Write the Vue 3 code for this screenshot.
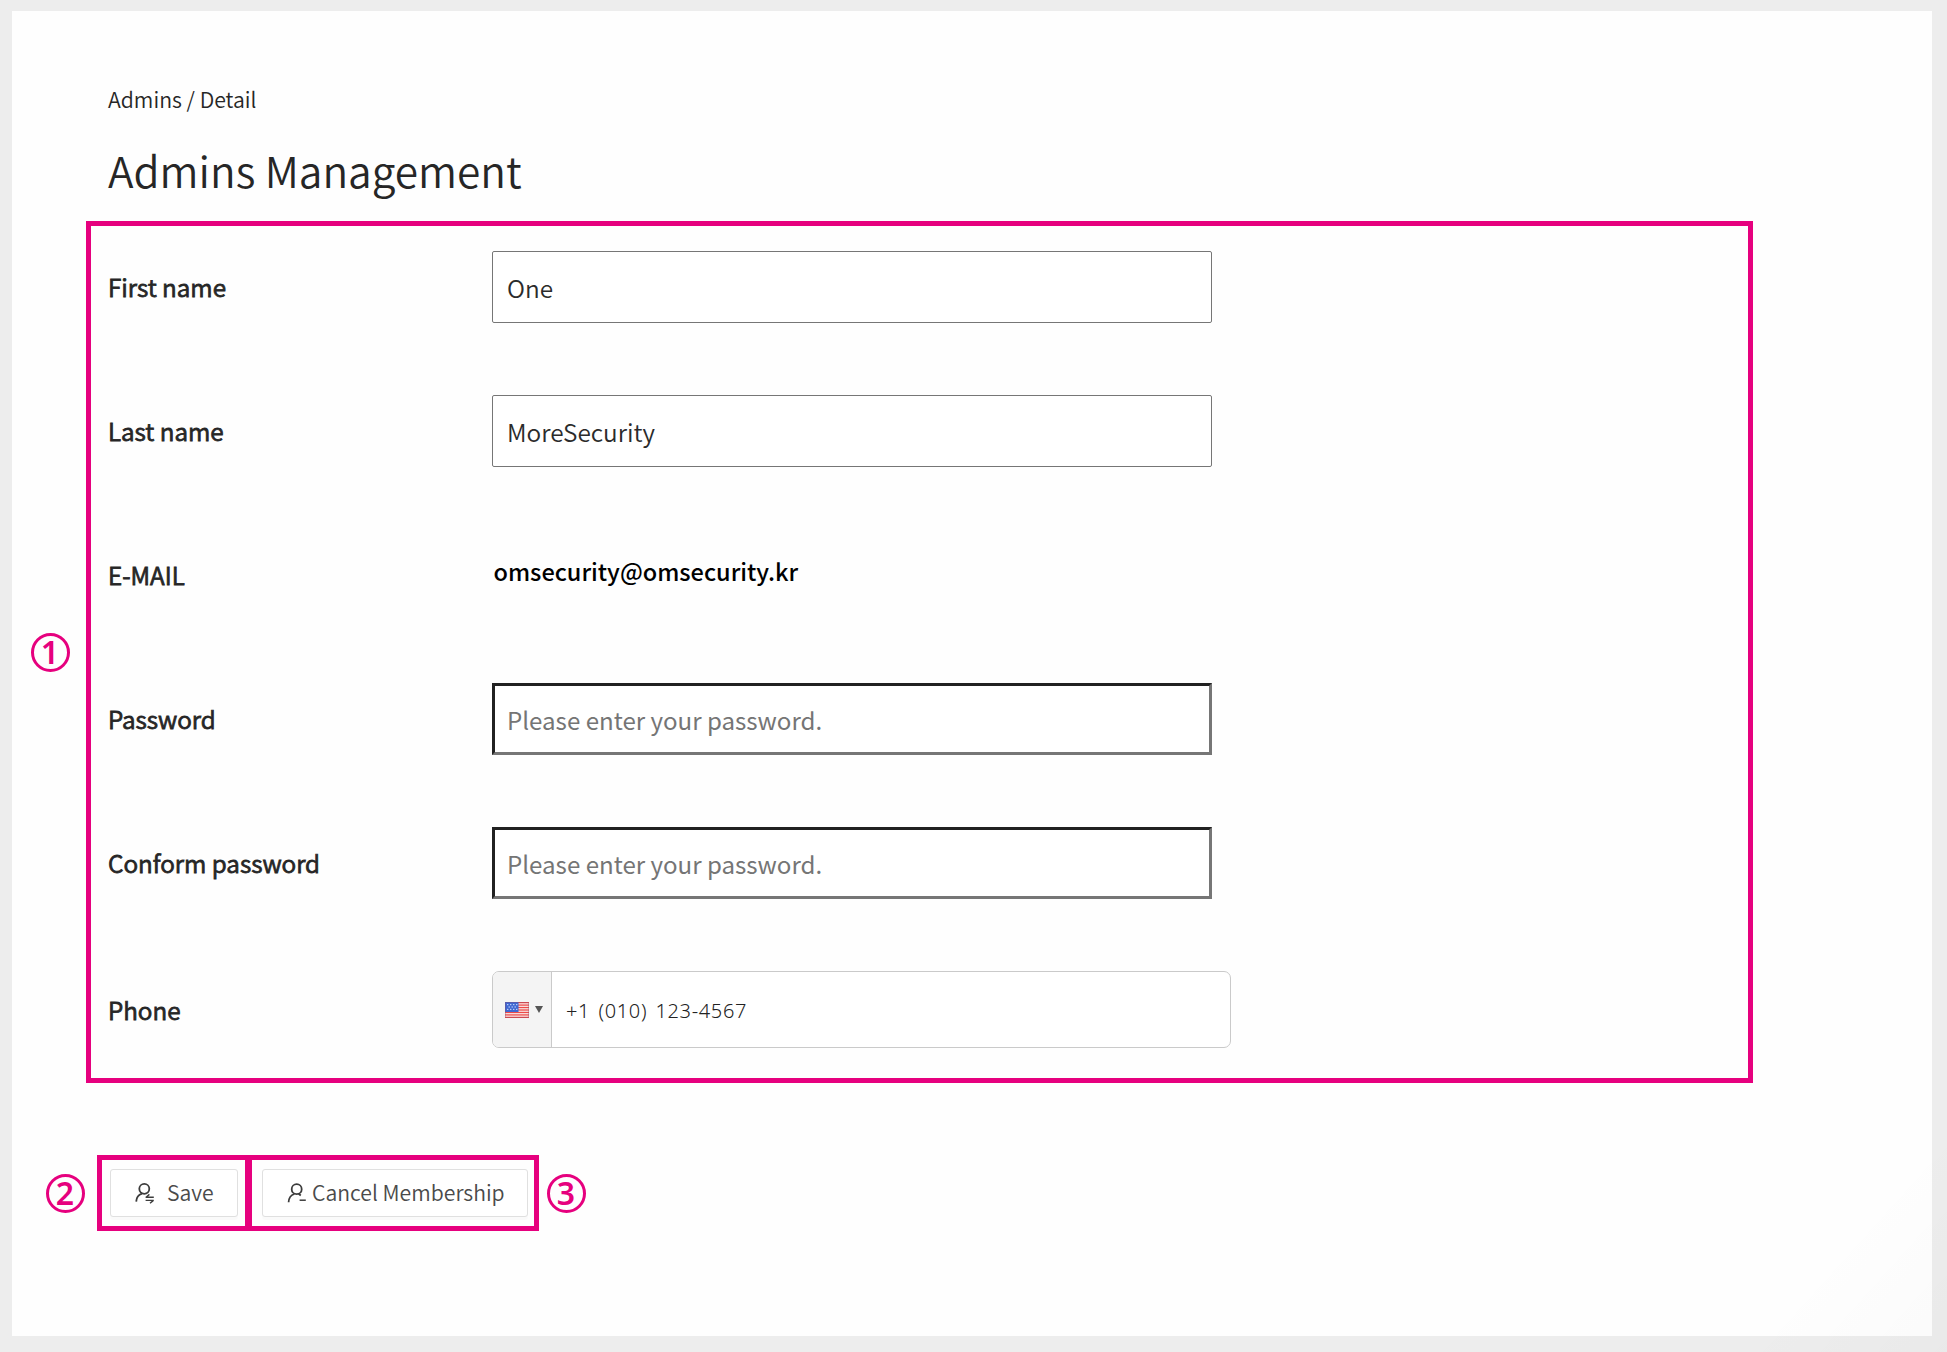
<script setup>
import { ref } from 'vue'

const form = ref({
  firstName: 'One',
  lastName: 'MoreSecurity',
  email: 'omsecurity@omsecurity.kr',
  password: '',
  confirm: '',
  phone: '+1 (010) 123-4567',
})
const placeholder = 'Please enter your password.'
const stripes = [0, 1, 2, 3, 4, 5, 6]
</script>

<template>
  <div class="page">
    <main class="panel">
      <nav class="breadcrumb">Admins / Detail</nav>
      <h1 class="title">Admins Management</h1>

      <section class="form marked">
        <span class="badge badge-form">1</span>
        <div class="row">
          <label>First name</label>
          <input v-model="form.firstName" class="field plain" type="text" />
        </div>
        <div class="row">
          <label>Last name</label>
          <input v-model="form.lastName" class="field plain" type="text" />
        </div>
        <div class="row">
          <label>E-MAIL</label>
          <span class="email">{{ form.email }}</span>
        </div>
        <div class="row">
          <label>Password</label>
          <input v-model="form.password" class="field inset" type="password" :placeholder="placeholder" />
        </div>
        <div class="row">
          <label>Conform password</label>
          <input v-model="form.confirm" class="field inset" type="password" :placeholder="placeholder" />
        </div>
        <div class="row row-phone">
          <label>Phone</label>
          <div class="phone">
            <div class="country">
              <svg class="flag" width="24" height="16" viewBox="0 0 24 16">
                <rect width="24" height="16" fill="#f7e9e9" />
                <rect v-for="s in stripes" :key="s" x="0" :y="s * 2.46" width="24" height="1.25" fill="#ee4a48" />
                <rect width="13.5" height="10" fill="#3f68d2" />
                <g fill="#b9cbf5">
                  <rect x="2" y="2" width="1.4" height="1.2" /><rect x="5" y="2" width="1.4" height="1.2" /><rect x="8" y="2" width="1.4" height="1.2" /><rect x="11" y="2" width="1.4" height="1.2" />
                  <rect x="3.5" y="4.4" width="1.4" height="1.2" /><rect x="6.5" y="4.4" width="1.4" height="1.2" /><rect x="9.5" y="4.4" width="1.4" height="1.2" />
                  <rect x="2" y="6.8" width="1.4" height="1.2" /><rect x="5" y="6.8" width="1.4" height="1.2" /><rect x="8" y="6.8" width="1.4" height="1.2" /><rect x="11" y="6.8" width="1.4" height="1.2" />
                </g>
                <rect x=".5" y=".5" width="23" height="15" fill="none" stroke="#8a4a6a" stroke-opacity=".35" />
              </svg>
              <span class="caret"></span>
            </div>
            <input v-model="form.phone" class="phone-input" type="tel" />
          </div>
        </div>
      </section>

      <div class="actions">
        <div class="action marked save">
          <span class="badge badge-save">2</span>
          <button type="button">
            <svg width="20" height="22" viewBox="0 0 20 22" fill="none" stroke="#3c3c3c" stroke-width="1.8">
              <circle cx="9.3" cy="6.8" r="5" />
              <path d="M1.2 19.6C1.4 15.4 3.4 12.7 7 11.6" />
              <path d="M10.6 15.2H18.8M14.4 12.4L11.4 15M10.6 18.4H18.8M18.2 18.6L15 21.2" stroke-width="1.4" />
            </svg>
            <span>Save</span>
          </button>
        </div>
        <div class="action marked cancel">
          <span class="badge badge-cancel">3</span>
          <button type="button">
            <svg width="20" height="22" viewBox="0 0 20 22" fill="none" stroke="#3c3c3c" stroke-width="1.8">
              <circle cx="9.7" cy="7.2" r="5" />
              <path d="M1.6 20.3C1.8 15.8 3.8 13.1 7.4 12M11.6 11.8L13.8 13.5" />
              <path d="M12.6 18.2H18.8" stroke-width="1.5" />
            </svg>
            <span>Cancel Membership</span>
          </button>
        </div>
      </div>
    </main>
  </div>
</template>

<style>
body {
  margin: 0;
}
</style>

<style scoped>
.page {
  position: relative;
  box-sizing: border-box;
  width: 1947px;
  height: 1352px;
  padding: 11px 15px 16px 12px;
  background: #ededed;
  font-family: "Noto Sans CJK KR", "Noto Sans", sans-serif;
  font-weight: 350;
  color: #262626;
  overflow: hidden;
}
.page::after {
  content: "";
  position: absolute;
  right: 0;
  bottom: 0;
  width: 400px;
  height: 400px;
  background: linear-gradient(132deg, rgba(0, 0, 0, 0) 72%, rgba(0, 0, 0, 0.016) 100%);
  pointer-events: none;
}
.panel {
  box-sizing: border-box;
  width: 1920px;
  height: 1325px;
  padding: 72px 0 0 74px;
  background: #fefefe;
}
.breadcrumb {
  margin-left: 22px;
  font-size: 21.25px;
  line-height: 32px;
}
.title {
  margin: 24px 0 20px 22px;
  font-size: 42.4px;
  font-weight: 350;
  line-height: 62px;
}
.marked {
  position: relative;
  box-sizing: border-box;
  border: 5px solid #e6007e;
}
.badge {
  position: absolute;
  box-sizing: border-box;
  width: 39px;
  height: 39px;
  border: 3px solid #e6007e;
  border-radius: 50%;
  color: #e6007e;
  font: 600 32px/31px "Noto Sans", sans-serif;
  text-align: center;
}
.badge-form {
  left: -60.5px;
  top: 406.5px;
}
.badge-save {
  left: -56.5px;
  top: 13.5px;
}
.badge-cancel {
  left: 294.5px;
  top: 13.5px;
}
.form {
  display: flex;
  flex-direction: column;
  gap: 72px;
  width: 1667px;
  height: 862px;
  padding: 25px 0 0 17px;
}
.row {
  display: grid;
  grid-template-columns: 384px 739px;
  align-items: center;
  height: 72px;
}
.row-phone {
  height: 77px;
}
label {
  padding-bottom: 1px;
  font-size: 24.3px;
  line-height: 35px;
  -webkit-text-stroke: 0.8px currentColor;
}
.field {
  box-sizing: border-box;
  width: 720px;
  height: 72px;
  margin: 0;
  outline: none;
  background: #fff;
  color: #2b2b2b;
  font-family: inherit;
  font-size: 24.35px;
  font-weight: 350;
}
.field::placeholder {
  color: #757575;
}
.plain {
  padding: 0 14px;
  border: 1px solid #767676;
  border-radius: 2px;
}
.inset {
  padding: 1px 12px 0;
  border: 3px solid;
  border-color: #212121 #767676 #767676 #212121;
  border-radius: 0;
  font-size: 24.1px;
  font-weight: 400;
}
.email {
  margin: 0 0 8px 1.5px;
  color: #000;
  font-size: 23.5px;
  font-weight: 500;
  line-height: 34px;
}
.phone {
  display: flex;
  box-sizing: border-box;
  width: 739px;
  height: 77px;
  border: 1px solid #cacaca;
  border-radius: 7px;
  background: #fff;
  overflow: hidden;
}
.country {
  display: flex;
  align-items: center;
  gap: 6px;
  box-sizing: border-box;
  width: 59px;
  padding-left: 12px;
  border-right: 1px solid #cacaca;
  background: #f4f4f4;
}
.flag {
  display: block;
}
.caret {
  border: 4.5px solid transparent;
  border-top: 7px solid #555;
  border-bottom: 0;
}
.phone-input {
  flex: 1;
  min-width: 0;
  padding: 2px 0 0 14px;
  border: 0;
  outline: none;
  background: transparent;
  color: #222;
  font: 350 20px "Noto Sans", sans-serif;
  letter-spacing: 0.65px;
  word-spacing: 2.5px;
}
.actions {
  display: flex;
  margin: 72px 0 0 11px;
}
.action {
  height: 76px;
}
.save {
  width: 153px;
  padding: 9px 7px 9px 8px;
}
.cancel {
  width: 292px;
  margin-left: -3px;
  padding: 9px 6px 9px 10px;
}
button {
  display: flex;
  align-items: center;
  box-sizing: border-box;
  width: 100%;
  height: 48px;
  padding: 0 0 2px;
  border: 1px solid #e0e0e0;
  border-radius: 3px;
  background: #fff;
  box-shadow: 0 3px 0 rgba(0, 0, 0, 0.016);
  color: #4a4a4a;
  font-family: inherit;
  font-size: 21.2px;
  font-weight: 350;
  line-height: 32px;
  white-space: nowrap;
}
.save button {
  padding-left: 24px;
}
.save button span {
  margin-left: 12px;
}
.cancel button {
  padding-left: 24px;
}
.cancel button span {
  margin-left: 5px;
}
button svg {
  flex: none;
  margin-top: 2px;
}
</style>
